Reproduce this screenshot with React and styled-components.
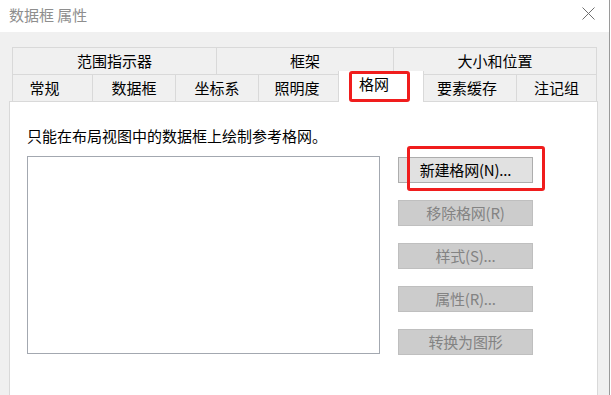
import React from "react";
import styled, { createGlobalStyle } from "styled-components";

const Global = createGlobalStyle`
  html, body { margin: 0; padding: 0; background: #ffffff; }
  body { font-family: "Noto Sans CJK SC", "Noto Sans", sans-serif; }
  * { box-sizing: border-box; }
`;

const Window = styled.div`
  width: 610px;
  height: 395px;
  display: flex;
  flex-direction: column;
  border-right: 1px solid #9a9a9a;
  overflow: hidden;
`;

const TitleBar = styled.div`
  height: 32px;
  flex: none;
  display: flex;
  align-items: center;
  justify-content: space-between;
  padding: 0 14px 0 9px;
  background: #ffffff;
`;

const Title = styled.div`
  font-size: 15px;
  line-height: 20px;
  color: #8e8e8e;
  margin-top: -2px;
`;

const CloseBtn = styled.div`
  width: 13px;
  height: 13px;
  display: flex;
  margin-top: -5px;
`;

const Body = styled.div`
  flex: 1;
  display: flex;
  flex-direction: column;
  background: #f0f0f0;
  padding: 15px 11px 0 9px;
`;

const Tabs = styled.div`
  display: flex;
  flex-direction: column;
  margin: 0 2px 0 3px;
`;

const TabRow = styled.div`
  display: flex;
  height: 27px;
  border-left: 1px solid #d9d9d9;
`;

const Tab = styled.div`
  width: ${(p) => p.$w}px;
  flex: none;
  display: flex;
  align-items: center;
  justify-content: center;
  padding-right: ${(p) => p.$pr || 0}px;
  border-top: 1px solid #d9d9d9;
  border-right: 1px solid #d9d9d9;
  background: #f0f0f0;
  font-size: 15px;
  line-height: 20px;
  color: #000000;
`;

const SelectedTab = styled.div`
  width: ${(p) => p.$w}px;
  flex: none;
  position: relative;
  z-index: 1;
  margin: -3px 0 -1px -1px;
  height: 31px;
  display: flex;
  align-items: stretch;
  padding-left: 10px;
  background: #ffffff;
  border-left: 1px solid #d9d9d9;
  border-right: 1px solid #d9d9d9;
  font-size: 15px;
  line-height: 18px;
  color: #000000;
`;

const RedMark = styled.div`
  width: 61px;
  border: 3px solid #f01d1d;
  border-radius: 3px;
  padding: 1px 0 0 7px;
`;

const Panel = styled.div`
  flex: 1;
  background: #ffffff;
  border: 1px solid #d9d9d9;
  border-bottom: none;
  padding: 24px 0 0 17px;
`;

const Hint = styled.div`
  font-size: 15px;
  line-height: 20px;
  color: #000000;
`;

const Content = styled.div`
  display: flex;
  align-items: flex-start;
  gap: 18px;
  margin-top: 10px;
`;

const ListBox = styled.div`
  width: 353px;
  height: 198px;
  background: #ffffff;
  border: 1px solid #a3a8b0;
`;

const ButtonCol = styled.div`
  display: flex;
  flex-direction: column;
  gap: 17px;
  margin-top: 1px;
`;

const ButtonWrap = styled.div`
  position: relative;
  display: flex;
`;

const Btn = styled.button`
  width: 135px;
  height: 26px;
  padding: 0 0 1px;
  margin: 0;
  background: #e1e1e1;
  border: 1px solid #adadad;
  font-family: "Noto Sans CJK SC", "Noto Sans", sans-serif;
  font-size: 15px;
  line-height: 18px;
  color: #000000;
  display: flex;
  align-items: center;
  justify-content: center;
  letter-spacing: -0.2px;

  &:disabled {
    background: #cccccc;
    border-color: #bfbfbf;
    color: #838383;
  }
`;

const Callout = styled.div`
  position: absolute;
  left: 9px;
  top: -11px;
  width: 138px;
  height: 45px;
  border: 3px solid #f01d1d;
  border-radius: 3px;
  pointer-events: none;
`;

const row1 = [
  { label: "范围指示器", w: 204 },
  { label: "框架", w: 177 },
  { label: "大小和位置", w: 203 },
];

const row2 = [
  { label: "常规", w: 80, pr: 16 },
  { label: "数据框", w: 83 },
  { label: "坐标系", w: 83 },
  { label: "照明度", w: 80, pr: 3 },
  { label: "格网", w: 86, selected: true },
  { label: "要素缓存", w: 93, pr: 6 },
  { label: "注记组", w: 80 },
];

const buttons = [
  { label: "新建格网(N)...", enabled: true, marked: true },
  { label: "移除格网(R)" },
  { label: "样式(S)..." },
  { label: "属性(R)..." },
  { label: "转换为图形" },
];

export default function App() {
  return (
    <>
      <Global />
      <Window>
        <TitleBar>
          <Title>数据框 属性</Title>
          <CloseBtn>
            <svg width="13" height="13" viewBox="0 0 13 13">
              <path d="M0.5 0.5 L12.5 12.5 M12.5 0.5 L0.5 12.5" stroke="#6e6e6e" strokeWidth="1" fill="none" />
            </svg>
          </CloseBtn>
        </TitleBar>
        <Body>
          <Tabs>
            <TabRow>
              {row1.map((t) => (
                <Tab key={t.label} $w={t.w}>{t.label}</Tab>
              ))}
            </TabRow>
            <TabRow>
              {row2.map((t) =>
                t.selected ? (
                  <SelectedTab key={t.label} $w={t.w}>
                    <RedMark>{t.label}</RedMark>
                  </SelectedTab>
                ) : (
                  <Tab key={t.label} $w={t.w} $pr={t.pr}>{t.label}</Tab>
                )
              )}
            </TabRow>
          </Tabs>
          <Panel>
            <Hint>只能在布局视图中的数据框上绘制参考格网。</Hint>
            <Content>
              <ListBox />
              <ButtonCol>
                {buttons.map((b) => (
                  <ButtonWrap key={b.label}>
                    <Btn disabled={!b.enabled}>{b.label}</Btn>
                    {b.marked && <Callout />}
                  </ButtonWrap>
                ))}
              </ButtonCol>
            </Content>
          </Panel>
        </Body>
      </Window>
    </>
  );
}
